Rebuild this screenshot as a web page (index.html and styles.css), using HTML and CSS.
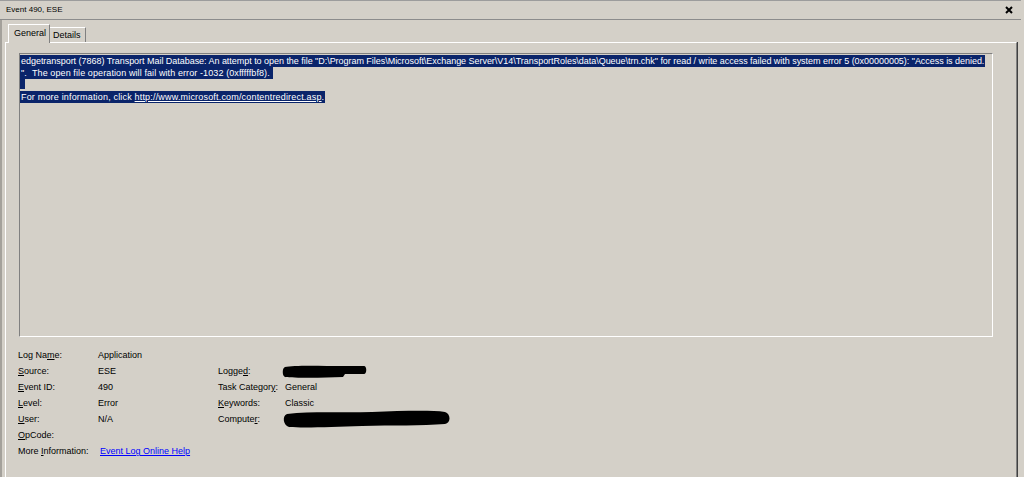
FILE: index.html
```html
<!DOCTYPE html>
<html>
<head>
<meta charset="utf-8">
<link rel="stylesheet" href="styles.css">
</head>
<body>
<div class="window">
  <div class="titlebar">
    <span class="title">Event 490, ESE</span>
    <svg class="close" width="8" height="8" viewBox="0 0 8 8"><path d="M1 1 L7 7 M7 1 L1 7" stroke="#000" stroke-width="2"/></svg>
  </div>
  <div class="main">
    <div class="tabs">
      <div class="tab active">General</div>
      <div class="tab">Details</div>
    </div>
    <div class="panel">
      <div class="textbox">
        <div class="line"><span class="sel tight">edgetransport (7868) Transport Mail Database: An attempt to open the file "D:\Program Files\Microsoft\Exchange Server\V14\TransportRoles\data\Queue\trn.chk" for read / write access failed with system error 5 (0x00000005): "Access is denied.</span></div>
        <div class="line"><span class="sel loose">".&nbsp; The open file operation will fail with error -1032 (0xfffffbf8). </span></div>
        <div class="line"><span class="sel blank"></span></div>
        <div class="line"><span class="sel looser">For more information, click <span class="ulink">http://www.microsoft.com/contentredirect.asp</span>.</span></div>
      </div>
      <div class="info">
        <div>Log Na<u>m</u>e:</div><div>Application</div><div></div><div></div>
        <div><u>S</u>ource:</div><div>ESE</div><div>Logge<u>d</u>:</div>
        <div><svg class="blob b1" width="88" height="16" viewBox="0 0 88 16"><path d="M3 4 C12 2 40 3 62 3 L82 3 C85 3 85 11 82 11 L63 11 L61 14 C40 15 12 15 3 14 C0 13 0 5 3 4 Z" fill="#000"/></svg></div>
        <div><u>E</u>vent ID:</div><div>490</div><div>Task Categor<u>y</u>:</div><div>General</div>
        <div><u>L</u>evel:</div><div>Error</div><div><u>K</u>eywords:</div><div>Classic</div>
        <div><u>U</u>ser:</div><div>N/A</div><div>Compute<u>r</u>:</div>
        <div><svg class="blob b2" width="170" height="20" viewBox="0 0 170 20"><path d="M5 5 C30 2 60 4 90 3 C120 2 148 1 163 3 C169 5 169 14 163 15 C140 17 110 16 80 17 C50 18 22 19 7 18 C1 16 0 7 5 5 Z" fill="#000"/></svg></div>
        <div><u>O</u>pCode:</div><div></div><div></div><div></div>
        <div>More <u>I</u>nformation:</div><div><span class="link">Event Log Online Help</span></div><div></div><div></div>
      </div>
    </div>
  </div>
</div>
</body>
</html>
```
FILE: styles.css
```css
html, body {
  margin: 0;
  padding: 0;
  background: #d4d0c8;
  overflow: hidden;
}
body {
  width: 1024px;
  height: 477px;
  font-family: "Liberation Sans", Arial, sans-serif;
  font-size: 9px;
  color: #000;
}
.window {
  height: 477px;
  display: flex;
  flex-direction: column;
}
.titlebar {
  height: 18px;
  border-top: 1px solid #9c9c9c;
  border-bottom: 1px solid #8c8c8c;
  margin-right: 3px;
  display: flex;
  align-items: center;
  justify-content: space-between;
  padding: 0 8px 0 6px;
}
.title {
  font-size: 8px;
  line-height: 18px;
}
.close {
  display: block;
}
.main {
  flex: 1;
  border-left: 2px solid #a4a19b;
  padding: 4px 7px 0 3px;
  display: flex;
  flex-direction: column;
  min-height: 0;
}
.tabs {
  display: flex;
  align-items: flex-end;
  padding-left: 3px;
  height: 18px;
  position: relative;
  z-index: 1;
}
.tab {
  border-top: 1px solid #fff;
  border-left: 1px solid #fff;
  border-right: 1px solid #808080;
  height: 14px;
  line-height: 14px;
  padding: 0 3px 0 3px;
  box-sizing: border-box;
}
.tab.active {
  height: 19px;
  line-height: 16px;
  padding: 0 5px 0 5px;
  width: 42px;
  background: #d4d0c8;
  margin-bottom: -1px;
}
.tab:not(.active) {
  width: 36px;
  height: 15px;
  border-left: none;
}
.panel {
  flex: 1;
  border-top: 1px solid #fff;
  border-left: 1px solid #fff;
  border-right: 1px solid #808080;
  box-shadow: 1px 0 0 #404040;
  padding: 10px 12px 0 12px;
}
.textbox {
  margin-left: 1px;
  width: 972px;
  height: 281px;
  border-top: 1px solid #808080;
  border-left: 1px solid #808080;
  border-bottom: 1px solid #fff;
  border-right: 1px solid #fff;
  padding: 1px 0 0 0;
  overflow: hidden;
}
.line {
  height: 12px;
  line-height: 12px;
  white-space: pre;
}
.sel {
  background: #0a246a;
  color: #fff;
  padding-left: 1px;
  padding-right: 1px;
  display: inline-block;
  height: 12px;
}
.sel.tight {
  letter-spacing: -0.035px;
}
.sel.loose {
  letter-spacing: 0.1px;
}
.sel.looser {
  letter-spacing: 0.18px;
}
.sel.blank {
  width: 5px;
  height: 10px;
  padding: 0;
}
.ulink {
  text-decoration: underline;
}
.info {
  margin-top: 10px;
  display: grid;
  grid-template-columns: 80px 120px 67px 1fr;
  grid-auto-rows: 16px;
  line-height: 16px;
}
.info u {
  text-decoration: underline;
}
.link {
  color: #0000ff;
  text-decoration: underline;
  margin-left: 2px;
}
.blob {
  display: block;
  margin-left: -3px;
}
.b1 {
  margin-top: 0;
}
.b2 {
  margin-top: -2px;
}
```
